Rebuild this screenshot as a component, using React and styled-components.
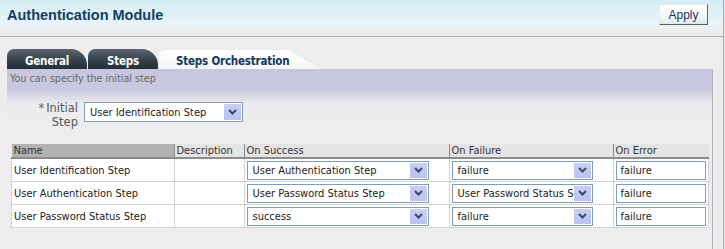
import React from 'react';
import styled, { createGlobalStyle } from 'styled-components';

const GlobalStyle = createGlobalStyle`
  html, body {
    margin: 0;
    padding: 0;
    background: #ededed;
    font-family: "DejaVu Sans", "Liberation Sans", sans-serif;
  }
`;

const Page = styled.div`
  width: 723px;
  height: 249px;
  border-right: 1px solid #a8a8a8;
  background: linear-gradient(#d6ecf6 0px, #eaf4f8 24px, #ededed 30px);
  overflow: hidden;
`;

const Header = styled.div`
  display: flex;
  align-items: flex-start;
  justify-content: space-between;
  height: 37px;
  padding: 4px 15px 0 7px;
  box-sizing: border-box;
  border-bottom: 1px solid #b0b0b0;
`;

const Title = styled.h1`
  margin: 3px 0 0;
  font: bold 14.5px "Liberation Sans", sans-serif;
  color: #0f3f66;
`;

const ApplyButton = styled.button`
  width: 49px;
  height: 21px;
  font: 12px "Liberation Sans", sans-serif;
  color: #1d2f6b;
  background: linear-gradient(#ffffff, #f4f8f8 60%, #d4ecec);
  border: 1px solid #e8e8e8;
  border-right-color: #606060;
  border-bottom-color: #606060;
  padding: 0;
`;

const Body = styled.div`
  padding: 12px 10px 0 7px;
`;

const Tabs = styled.div`
  display: flex;
  align-items: flex-end;
  height: 20px;
`;

const Tab = styled.div`
  height: ${p => (p.$active ? 19 : 20)}px;
  box-sizing: border-box;
  padding-top: ${p => (p.$active ? 4 : 5)}px;
  font: bold 11.5px "DejaVu Sans", sans-serif;
  font-stretch: semi-condensed;
  letter-spacing: -0.2px;
  color: ${p => (p.$active ? '#14355e' : '#ffffff')};
  width: ${p => p.$w}px;
  text-align: ${p => (p.$active ? 'left' : 'center')};
  padding-left: ${p => (p.$active ? 17 : 0)}px;
  background: ${p =>
    p.$active
      ? 'linear-gradient(#ffffff, #f6f6f6)'
      : 'linear-gradient(#5b6670, #34404a 55%, #262f38)'};
  border-radius: ${p => (p.$active ? '6px 0 0 0' : '7px 16px 0 0')};
  clip-path: ${p =>
    p.$active ? 'polygon(0 0, 80% 0, 100% 100%, 0 100%)' : 'none'};
  margin-right: ${p => (p.$active ? 0 : 1)}px;
`;

const Panel = styled.div`
  width: 705px;
  height: 180px;
  background: linear-gradient(#c6c6de 0px, #c8c8de 20px, #dcdce6 28px, #ececf0 36px, #ededed 48px);
  border-right: 1px solid #b4b4c4;
`;

const Hint = styled.div`
  padding: 3px 0 0 3px;
  height: 13px;
  font: 10.7px "DejaVu Sans", sans-serif;
  font-stretch: semi-condensed;
  color: #6a6a6a;
`;

const Field = styled.div`
  display: flex;
  align-items: flex-start;
  gap: 6px;
  padding: 17px 0 0 0;
`;

const Label = styled.div`
  width: 71px;
  margin-top: -1px;
  text-align: right;
  font: 11.5px/14px "DejaVu Sans", sans-serif;
  color: #555;
`;

const Req = styled.span`
  color: #666;
  margin-right: 2px;
`;

const SelectBox = styled.div`
  display: flex;
  align-items: center;
  justify-content: space-between;
  width: ${p => p.$w}px;
  height: ${p => p.$h}px;
  box-sizing: border-box;
  background: #fff;
  border: 1px solid #7f9db9;
  padding: 0 1px 0 5px;
  font: 11px "DejaVu Sans", sans-serif;
  font-stretch: semi-condensed;
  color: #222;
  white-space: nowrap;
  overflow: hidden;
`;

const Chevron = styled.span`
  display: flex;
  align-items: center;
  justify-content: center;
  flex: none;
  width: 17px;
  height: ${p => p.$h}px;
  background: linear-gradient(#c8d0f6, #b8c2f0);
`;

const Arrow = ({ h }) => (
  <Chevron $h={h}>
    <svg width="9" height="6" viewBox="0 0 9 6">
      <path d="M1 1 L4.5 4.5 L8 1" fill="none" stroke="#3a4866" strokeWidth="2" />
    </svg>
  </Chevron>
);

const Select = ({ value, w, h = 20 }) => (
  <SelectBox $w={w} $h={h}>
    <span>{value}</span>
    <Arrow h={h - 4} />
  </SelectBox>
);

const Grid = styled.table`
  margin: 15px 0 0 4px;
  width: 698px;
  border-collapse: collapse;
  font: 11px "DejaVu Sans", sans-serif;
  font-stretch: semi-condensed;
  color: #222;
`;

const Th = styled.th`
  height: 13px;
  padding: 0 2px;
  text-align: left;
  font-weight: normal;
  color: #333;
  background: ${p => (p.$dark ? '#b2b2b2' : '#e4e4e4')};
  border-left: 1px solid #8a8a8a;
  border-bottom: 2px solid #8c8c8c;
  width: ${p => p.$w}px;
  &:first-child { border-left: none; }
`;

const Td = styled.td`
  height: 22px;
  padding: 0 2px;
  background: #fff;
  border: 1px dotted #bcbcbc;
  border-top: none;
  white-space: nowrap;
  overflow: hidden;
`;

const InputBox = styled.div`
  height: 19px;
  width: 100%;
  box-sizing: border-box;
  border: 1px solid #7f9db9;
  background: #fff;
  padding: 2px 4px 0;
`;

const rows = [
  ['User Identification Step', 'User Authentication Step', 'failure', 'failure'],
  ['User Authentication Step', 'User Password Status Step', 'User Password Status S', 'failure'],
  ['User Password Status Step', 'success', 'failure', 'failure'],
];

export default function App() {
  return (
    <>
      <GlobalStyle />
      <Page>
        <Header>
          <Title>Authentication Module</Title>
          <ApplyButton>Apply</ApplyButton>
        </Header>
        <Body>
          <Tabs>
            <Tab $w={80}>General</Tab>
            <Tab $w={70}>Steps</Tab>
            <Tab $active $w={162}>Steps Orchestration</Tab>
          </Tabs>
          <Panel>
            <Hint>You can specify the initial step</Hint>
            <Field>
              <Label><Req>*</Req>Initial<br />Step</Label>
              <Select value="User Identification Step" w={159} />
            </Field>
            <Grid>
              <thead>
                <tr>
                  <Th $dark $w={158}>Name</Th>
                  <Th $w={65}>Description</Th>
                  <Th $w={200}>On Success</Th>
                  <Th $w={159}>On Failure</Th>
                  <Th>On Error</Th>
                </tr>
              </thead>
              <tbody>
                {rows.map(r => (
                  <tr key={r[0]}>
                    <Td>{r[0]}</Td>
                    <Td />
                    <Td><Select value={r[1]} w={182} h={19} /></Td>
                    <Td><Select value={r[2]} w={141} h={19} /></Td>
                    <Td><InputBox>{r[3]}</InputBox></Td>
                  </tr>
                ))}
              </tbody>
            </Grid>
          </Panel>
        </Body>
      </Page>
    </>
  );
}
